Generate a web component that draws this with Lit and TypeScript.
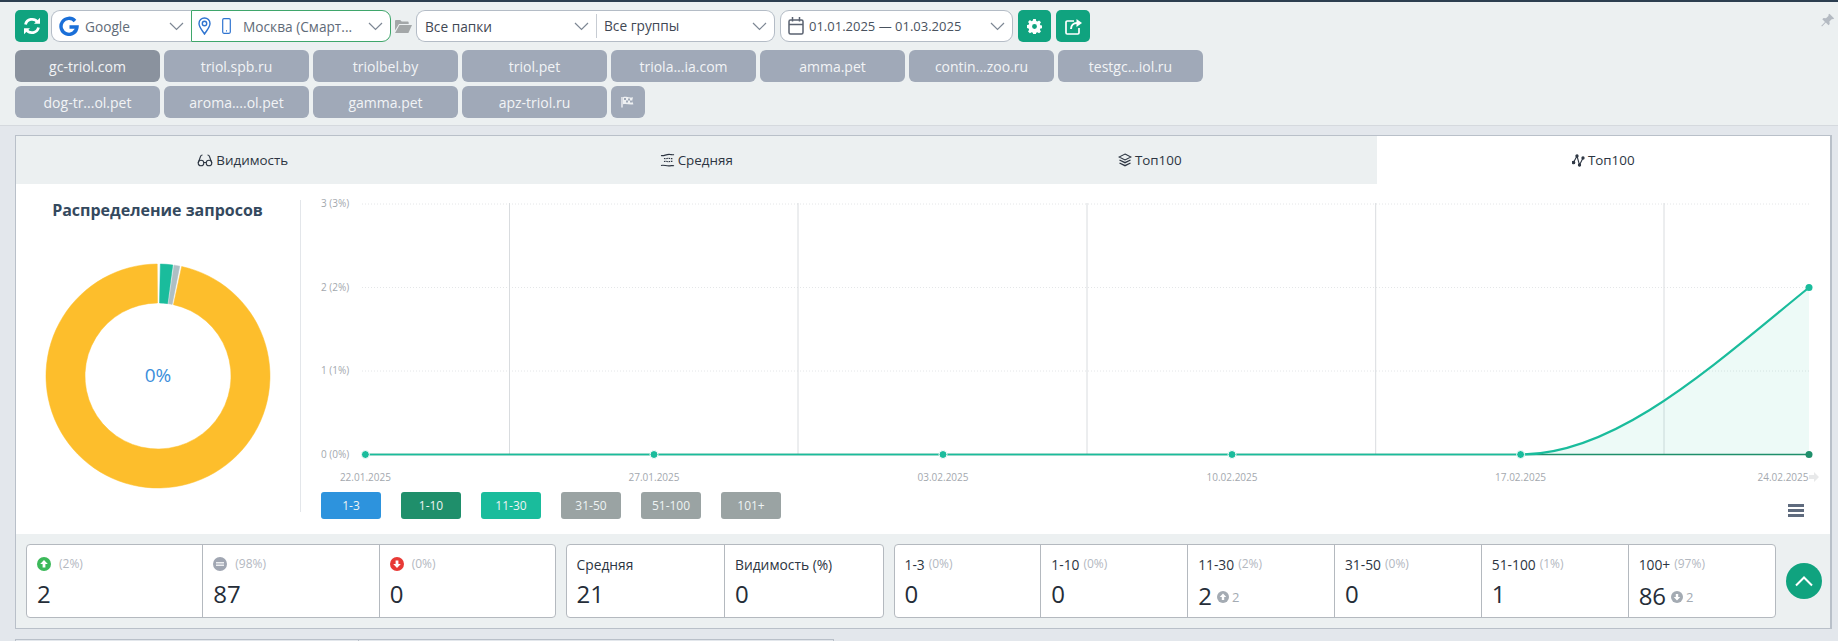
import { LitElement, html, css, svg } from "lit";
import { customElement } from "lit/decorators.js";

const chevron = html`<svg class="chev" width="15" height="9" viewBox="0 0 15 9"><path d="M1 1l6.5 6.5L14 1" fill="none" stroke="#7d8794" stroke-width="1.2"/></svg>`;

const DOMAINS_1 = ["gc-triol.com", "triol.spb.ru", "triolbel.by", "triol.pet", "triola...ia.com", "amma.pet", "contin...zoo.ru", "testgc...iol.ru"];
const DOMAINS_2 = ["dog-tr...ol.pet", "aroma....ol.pet", "gamma.pet", "apz-triol.ru"];

// chart geometry, in svg coordinates (svg starts at x=300, y=184)
const XS = [65.4, 354, 643, 932, 1220.6, 1509];
const GRID_X = [209.5, 498, 787, 1075.7, 1364];
const Y3 = 20, Y2 = 103.5, Y1 = 187, Y0 = 270.5;
const DATES = ["22.01.2025", "27.01.2025", "03.02.2025", "10.02.2025", "17.02.2025", "24.02.2025"];
const CURVE = `M1220.6 ${Y0} C1316.6 ${Y0} 1413 ${Y2 + 78} 1509 ${Y2}`;

@customElement("app-root")
export class AppRoot extends LitElement {
  static styles = css`
    :host {
      display: block;
      height: 641px;
      overflow: hidden;
      background: #e3e7ec;
      font-family: "Open Sans", "Noto Sans", sans-serif;
      color: #2c3542;
    }
    .toolbar {
      position: relative;
      height: 126px;
      box-sizing: border-box;
      border-top: 2px solid #2c3e50;
      border-bottom: 1px solid #d5d9de;
      background: #ecf0f1;
      padding: 8px 15px 0;
      display: flex;
      flex-direction: column;
      gap: 8px;
    }
    .row { display: flex; align-items: center; }
    .btn {
      width: 33px;
      height: 32px;
      border-radius: 5px;
      background: #10a37f;
      display: flex;
      align-items: center;
      justify-content: center;
      flex: none;
    }
    .sel {
      height: 32px;
      box-sizing: border-box;
      border: 1px solid #b4bcc6;
      background: #fff;
      display: flex;
      align-items: center;
      font-size: 13.7px;
      color: #3f4854;
      white-space: nowrap;
      padding: 0 7px 0 8px;
      flex: none;
    }
    .sel .chev { margin-left: auto; }
    .google { width: 140px; margin-left: 3px; border-radius: 9px 0 0 9px; border-right: 0; color: #5f6b78; padding-left: 7px; }
    .google svg:first-child { margin-right: 6px; }
    .loc { width: 200px; border: 1px solid #3fa66b; border-radius: 0 9px 9px 0; color: #5f6b78; padding-left: 6px; }
    .loc svg:nth-child(2) { margin: 0 12px 0 11px; }
    .folder { width: 25px; display: flex; justify-content: center; flex: none; }
    .folders { width: 180px; border-radius: 9px 0 0 9px; border-right: 0; }
    .groups { width: 179px; border-radius: 0 9px 9px 0; border-left: 0; padding-left: 0; }
    .groups span { border-left: 1px solid #c7ccd3; padding-left: 7px; line-height: 24px; }
    .date { width: 233px; margin-left: 5px; border-radius: 9px; color: #49525e; padding-left: 7px; font-size: 13px; }
    .date svg:first-child { margin-right: 5px; }
    .toolbar .gear { margin-left: 5px; }
    .toolbar .share { margin-left: 5px; width: 34px; }
    .chips { display: flex; flex-direction: column; gap: 4px; margin-top: 0; }
    .chip-row { display: flex; gap: 4px; }
    .chip {
      width: 145px;
      height: 32px;
      border-radius: 6px;
      background: #a0a9b8;
      color: #f2f4f6;
      font-size: 14px;
      display: flex;
      align-items: center;
      justify-content: center;
    }
    .chip.on { background: #8a929e; }
    .chip.flag { width: 34px; }
    .pin { position: absolute; right: 3px; top: 11px; }

    .panel {
      margin: 9px 6px 0 15px;
      height: 494px;
      box-sizing: border-box;
      border: 1px solid #b9c0c9;
      border-width: 1px 2px 1px 1px;
      background: #ecf0f1;
      display: flex;
      flex-direction: column;
    }
    .tabs { display: grid; grid-template-columns: repeat(4, 1fr); height: 48px; flex: none; }
    .tab {
      display: flex;
      align-items: center;
      justify-content: center;
      gap: 3px;
      font-size: 13.4px;
      color: #2c3542;
    }
    .tab.on { background: #fff; }
    .body { background: #fff; height: 350px; display: flex; flex: none; }
    .donut-col {
      width: 284px;
      flex: none;
      box-sizing: border-box;
      display: flex;
      flex-direction: column;
      align-items: center;
      padding-right: 1px;
    }
    .donut-col h3 {
      margin: 15px 0 0;
      font-size: 16px;
      line-height: 22px;
      font-weight: 700;
      color: #34495e;
    }
    .donut { margin-top: 42px; }
    .chart-col {
      flex: 1;
      min-width: 0;
      position: relative;
      display: flex;
      flex-direction: column;
    }
    .chart-col::before {
      content: "";
      position: absolute;
      left: 0;
      top: 16px;
      height: 312px;
      border-left: 1px solid #e3e6ea;
    }
    .chart { display: block; flex: none; }
    .chart text { font-family: "Open Sans", sans-serif; font-size: 10px; fill: #a3a8ae; }
    .legend { display: flex; gap: 20px; padding: 0 0 0 21px; margin-top: 4px; align-items: flex-start; }
    .lg {
      width: 60px;
      height: 27px;
      border-radius: 3px;
      font-size: 12px;
      color: #eef3f3;
      display: flex;
      align-items: center;
      justify-content: center;
      background: #9aa3a3;
    }
    .lg.a { background: #2d93dd; }
    .lg.b { background: #1f8f6b; }
    .lg.c { background: #1abc9c; }
    .menu { margin-left: auto; margin-right: 26px; margin-top: 12px; display: block; }

    .stats { flex: 1; display: flex; align-items: flex-start; padding: 10px 0 0 10px; }
    .box {
      display: flex;
      height: 74px;
      box-sizing: border-box;
      border: 1px solid #b4b9bf;
      border-radius: 4px;
      background: #fff;
      flex: none;
    }
    .box.one { width: 530px; }
    .box.two { width: 318px; margin-left: 9.5px; }
    .box.three { width: 882px; margin-left: 10px; }
    .cell {
      flex: 1 1 0;
      min-width: 0;
      box-sizing: border-box;
      padding: 8px 10px 0;
      border-left: 1px solid #b4b9bf;
    }
    .cell:first-child { border-left: 0; }
    .cell .top { display: flex; align-items: center; height: 22px; font-size: 13.8px; color: #2c3542; white-space: nowrap; }
    .cell .pct { font-size: 12px; color: #b3b8bf; margin-left: 4px; position: relative; top: -1px; }
    .cell .top svg + .pct { margin-left: 8px; }
    .cell .val { display: flex; align-items: center; font-size: 24px; line-height: 32px; margin-top: 3px; color: #252d38; }
    .cell .delta { display: flex; align-items: center; gap: 3px; font-size: 13px; color: #a4abb3; margin-left: 5px; margin-top: 3px; }
    .up {
      width: 36px;
      height: 36px;
      border-radius: 50%;
      background: #10a37f;
      margin: 19px 0 0 10px;
      display: flex;
      align-items: center;
      justify-content: center;
      flex: none;
    }

    .under { display: flex; margin: 10px 0 0 15px; height: 2px; }
    .under div { border: 1px solid #b9c0c9; border-bottom: 0; height: 2px; box-sizing: border-box; }
    .under div:first-child { width: 344px; }
    .under div:last-child { width: 475px; border-left: 0; }
  `;

  private circleIcon(bg: string, kind: "up" | "eq" | "down", size = 14) {
    const mark =
      kind === "eq"
        ? svg`<rect x="3" y="5.2" width="8" height="1.2" fill="#fff"/><rect x="3" y="7.6" width="8" height="1.2" fill="#fff"/>`
        : kind === "up"
          ? svg`<path d="M7 3L3.2 7H5.6v3.6h2.8V7h2.4z" fill="#fff"/>`
          : svg`<path d="M7 11L3.2 7H5.6V3.4h2.8V7h2.4z" fill="#fff"/>`;
    return html`<svg width=${size} height=${size} viewBox="0 0 14 14"><circle cx="7" cy="7" r="7" fill=${bg}/>${mark}</svg>`;
  }

  private cell(label: string, pct: string, val: string, delta?: "up" | "down", d?: string) {
    return html`<div class="cell">
      <div class="top">${label}${pct ? html`<span class="pct">${pct}</span>` : ""}</div>
      <div class="val">
        ${val}
        ${delta ? html`<span class="delta">${this.circleIcon("#a4abb3", delta, 12)}${d}</span>` : ""}
      </div>
    </div>`;
  }

  private iconCell(color: string, kind: "up" | "eq" | "down", pct: string, val: string) {
    return html`<div class="cell">
      <div class="top">${this.circleIcon(color, kind)}<span class="pct">${pct}</span></div>
      <div class="val">${val}</div>
    </div>`;
  }

  private donutArc(a0: number, a1: number, color: string) {
    const cx = 113, cy = 113, r = 112, ri = 73;
    const p = (a: number, rad: number) => {
      const t = ((a - 90) * Math.PI) / 180;
      return `${(cx + rad * Math.cos(t)).toFixed(2)} ${(cy + rad * Math.sin(t)).toFixed(2)}`;
    };
    const large = a1 - a0 > 180 ? 1 : 0;
    return svg`<path d="M${p(a0, r)} A${r} ${r} 0 ${large} 1 ${p(a1, r)} L${p(a1, ri)} A${ri} ${ri} 0 ${large} 0 ${p(a0, ri)} Z" fill=${color} stroke=${color} stroke-width="0.5" stroke-linejoin="round"/>`;
  }

  private renderChart() {
    return html`<svg class="chart" width="1531" height="304" viewBox="0 0 1531 304">
      ${[Y3, Y2, Y1].map((y) => svg`<line x1="62" x2="1509" y1=${y} y2=${y} stroke="#e4e6e8" stroke-dasharray="1 2"/>`)}
      ${GRID_X.map((x) => svg`<line x1=${x} x2=${x} y1="19" y2=${Y0} stroke="#d9dcdf"/>`)}
      <path d="${CURVE} L1509 ${Y0} Z" fill="#1abc9c" fill-opacity="0.08"/>
      <line x1="65" x2="1509" y1=${Y0} y2=${Y0} stroke="#1f8f6b" stroke-width="1.6"/>
      <line x1="65" x2="1220.6" y1=${Y0} y2=${Y0} stroke="#1abc9c" stroke-width="1.6"/>
      <path d=${CURVE} fill="none" stroke="#1abc9c" stroke-width="2.2"/>
      ${XS.slice(0, 5).map((x) => svg`<circle cx=${x} cy=${Y0} r="4" fill="#1abc9c" stroke="#fff" stroke-width="1"/>`)}
      <circle cx="1509" cy=${Y0} r="3.5" fill="#1f8f6b"/>
      <circle cx="1509" cy=${Y2} r="3.5" fill="#1abc9c"/>
      <text x="21" y=${Y3 + 3}>3 (3%)</text>
      <text x="21" y=${Y2 + 3}>2 (2%)</text>
      <text x="21" y=${Y1 + 3}>1 (1%)</text>
      <text x="21" y=${Y0 + 3}>0 (0%)</text>
      ${DATES.map((d, i) => svg`<text x=${i === 5 ? 1483 : XS[i]} y="297" text-anchor="middle">${d}</text>`)}
      <path d="M1509 291h5v-3l5 5-5 5v-3h-5z" fill="#e8e9ea"/>
    </svg>`;
  }

  render() {
    return html`
      <div class="toolbar">
        <div class="row">
          <div class="btn">
            <svg width="20" height="20" viewBox="0 0 20 20" fill="none" stroke="#fff" stroke-width="2.8">
              <path d="M3.5 8.5A6.8 6.8 0 0 1 15.5 6"/><path d="M16.5 11.5A6.8 6.8 0 0 1 4.5 14"/>
              <path d="M18 1.8v6h-6z" fill="#fff" stroke="none"/><path d="M2 18.2v-6h6z" fill="#fff" stroke="none"/>
            </svg>
          </div>
          <div class="sel google">
            <svg width="20" height="20" viewBox="0 0 20 20">
              <path d="M16 5A8 8 0 1 0 18 11H10.5" fill="none" stroke="#1a6fd8" stroke-width="3.4"/>
            </svg>
            Google ${chevron}
          </div>
          <div class="sel loc">
            <svg width="13" height="18" viewBox="0 0 13 18" fill="none" stroke="#2f74d0" stroke-width="1.4">
              <path d="M6.5 17C3.5 12.5 1 10 1 6.5a5.5 5.5 0 0 1 11 0C12 10 9.5 12.5 6.5 17z"/><circle cx="6.5" cy="6.5" r="2.2"/>
            </svg>
            <svg width="9" height="16" viewBox="0 0 9 16" fill="none" stroke="#2f74d0" stroke-width="1.2">
              <rect x=".7" y=".7" width="7.6" height="14.6" rx="1.2"/><path d="M4 12.8h1"/>
            </svg>
            Москва (Смарт... ${chevron}
          </div>
          <div class="folder">
            <svg width="17" height="13" viewBox="0 0 17 13" fill="#a3a7a8">
              <path d="M0 1.2C0 .5.5 0 1.2 0h4l1.5 1.6h5.8c.7 0 1.2.5 1.2 1.2V4H4L0 10.5z"/><path d="M4.5 5H17l-3.6 8H0z"/>
            </svg>
          </div>
          <div class="sel folders">Все папки ${chevron}</div>
          <div class="sel groups"><span>Все группы</span> ${chevron}</div>
          <div class="sel date">
            <svg width="16" height="18" viewBox="0 0 16 18" fill="none" stroke="#5a6270" stroke-width="1.5">
              <rect x="1" y="3" width="14" height="14" rx="1.5"/><path d="M1 7.5h14M4.5 0v4.5M11.5 0v4.5"/>
            </svg>
            01.01.2025 — 01.03.2025 ${chevron}
          </div>
          <div class="btn gear">
            <svg width="15" height="15" viewBox="0 0 16 16">
              <path fill="#fff" fill-rule="evenodd" d="M6.6 0h2.8l.4 2.1 1.3.6 1.8-1.2 2 2-1.2 1.8.6 1.3 2.1.4v2.8l-2.1.4-.6 1.3 1.2 1.8-2 2-1.8-1.2-1.3.6-.4 2.1H6.6l-.4-2.1-1.3-.6-1.8 1.2-2-2 1.2-1.8-.6-1.3L-.4 9.4V6.6l2.1-.4.6-1.3L1.1 3.1l2-2 1.8 1.2 1.3-.6zM8 5.4a2.6 2.6 0 1 0 0 5.2 2.6 2.6 0 0 0 0-5.2z"/>
            </svg>
          </div>
          <div class="btn share">
            <svg width="17" height="17" viewBox="0 0 17 17" fill="none" stroke="#fff" stroke-width="1.7">
              <path d="M9 3H2.2C1.5 3 1 3.5 1 4.2v10.6c0 .7.5 1.2 1.2 1.2h10.6c.7 0 1.2-.5 1.2-1.2V10"/>
              <path d="M6 11c0-3.5 2.5-6 6-6" stroke-width="2"/><path d="M11.5 1L17 5l-5.5 4z" fill="#fff" stroke="none"/>
            </svg>
          </div>
        </div>
        <div class="chips">
          <div class="chip-row">
            ${DOMAINS_1.map((d, i) => html`<div class="chip ${i === 0 ? "on" : ""}">${d}</div>`)}
          </div>
          <div class="chip-row">
            ${DOMAINS_2.map((d) => html`<div class="chip">${d}</div>`)}
            <div class="chip flag">
              <svg width="14" height="12" viewBox="0 0 14 12">
                <path d="M1 1v10.5" stroke="#eef0f2" stroke-width="1.4"/>
                <path d="M2 1.2c3-1.2 5 1 10 0l-1 4 1.5 3c-4 1-7-1-10.500 0z" fill="#eef0f2"/>
                <path d="M5 2v2H3V2zM9 2.400v2H7v-2zM7 4.400v2H5v-2zM11 4.400v2H9v-2z" fill="#a0a9b8"/>
              </svg>
            </div>
          </div>
        </div>
        <svg class="pin" width="15" height="15" viewBox="0 0 15 15" fill="#b4bac2">
          <path d="M9.500.8l4.700 4.700-1.300.8-.9-.3-2.600 2.600.3 2.500-1.200 1.200-2.700-2.700L2 13.500l-.7-.7 3.700-3.900-2.700-2.700 1.200-1.200 2.500.3 2.600-2.600-.3-.9z"/>
        </svg>
      </div>

      <div class="panel">
        <div class="tabs">
          <div class="tab">
            <svg width="16" height="13" viewBox="0 0 15 13" fill="none" stroke="#2c3542" stroke-width="1.1">
              <circle cx="3.500" cy="9" r="2.800"/><circle cx="11.500" cy="9" r="2.800"/>
              <path d="M6.300 8.500h2.400M.7 9L3 2.500C3.300 1.500 4 1 5 1M14.300 9L12 2.500C11.700 1.500 11 1 10 1"/>
            </svg>
            Видимость
          </div>
          <div class="tab">
            <svg width="15" height="14" viewBox="0 0 15 14" fill="none" stroke="#2c3542" stroke-width="1.2">
              <path d="M1 2.500c3 1 5-1.500 9-1 2 .2 3 .5 4 0M1 12.500c3-1 5 .8 9 .3 2-.2 3-.5 4 0"/>
              <path d="M4 5.500c2 .5 4-.5 6 0 1 .2 2 .2 3 0M4 8.500c2-.5 4 .5 6 0 1-.2 2-.2 3 0" stroke-dasharray="1.500 .8"/>
            </svg>
            Средняя
          </div>
          <div class="tab">
            <svg width="14" height="14" viewBox="0 0 14 14" fill="none" stroke="#2c3542" stroke-width="1.1">
              <path d="M7 1l6 3-6 3-6-3z"/><path d="M1.500 7L7 9.700 12.500 7M1.500 10L7 12.700 12.500 10" stroke-width="1.300"/>
            </svg>
            Топ100
          </div>
          <div class="tab on">
            <svg width="13" height="13" viewBox="0 0 13 13" fill="none" stroke="#2c3542" stroke-width="1.1">
              <path d="M1.500 8.500L5 2l2.500 9L11 4"/>
              <circle cx="1.500" cy="8.500" r="1.300" fill="#2c3542"/><circle cx="5" cy="2" r="1.100" fill="#2c3542"/>
              <circle cx="7.500" cy="11" r="1.100" fill="#2c3542"/><circle cx="11" cy="4" r="1.100" fill="#2c3542"/>
            </svg>
            Топ100
          </div>
        </div>
        <div class="body">
          <div class="donut-col">
            <h3>Распределение запросов</h3>
            <svg class="donut" width="226" height="226" viewBox="0 0 226 226">
              ${this.donutArc(1.2, 7.6, "#1abc9c")}
              ${this.donutArc(8.2, 11.2, "#aebfc4")}
              ${this.donutArc(12.200, 359.600, "#fdbe2c")}
              <text x="113" y="119" text-anchor="middle" font-size="19" fill="#3b8edb" font-family="Open Sans, sans-serif">0%</text>
            </svg>
          </div>
          <div class="chart-col">
            ${this.renderChart()}
            <div class="legend">
              <div class="lg a">1-3</div>
              <div class="lg b">1-10</div>
              <div class="lg c">11-30</div>
              <div class="lg">31-50</div>
              <div class="lg">51-100</div>
              <div class="lg">101+</div>
              <svg class="menu" width="16" height="13" viewBox="0 0 16 13" fill="#5f6b7e">
                <rect width="16" height="3" y="0"/><rect width="16" height="3" y="5"/><rect width="16" height="3" y="10"/>
              </svg>
            </div>
          </div>
        </div>
        <div class="stats">
          <div class="box one">
            ${this.iconCell("#3cb95a", "up", "(2%)", "2")}
            ${this.iconCell("#a0a6b2", "eq", "(98%)", "87")}
            ${this.iconCell("#e83a36", "down", "(0%)", "0")}
          </div>
          <div class="box two">
            ${this.cell("Средняя", "", "21")}
            ${this.cell("Видимость (%)", "", "0")}
          </div>
          <div class="box three">
            ${this.cell("1-3", "(0%)", "0")}
            ${this.cell("1-10", "(0%)", "0")}
            ${this.cell("11-30", "(2%)", "2", "up", "2")}
            ${this.cell("31-50", "(0%)", "0")}
            ${this.cell("51-100", "(1%)", "1")}
            ${this.cell("100+", "(97%)", "86", "down", "2")}
          </div>
          <div class="up">
            <svg width="20" height="12" viewBox="0 0 20 12"><path d="M2 10.500L10 2.500l8 8" fill="none" stroke="#fff" stroke-width="2"/></svg>
          </div>
        </div>
      </div>
      <div class="under"><div></div><div></div></div>
    `;
  }
}
